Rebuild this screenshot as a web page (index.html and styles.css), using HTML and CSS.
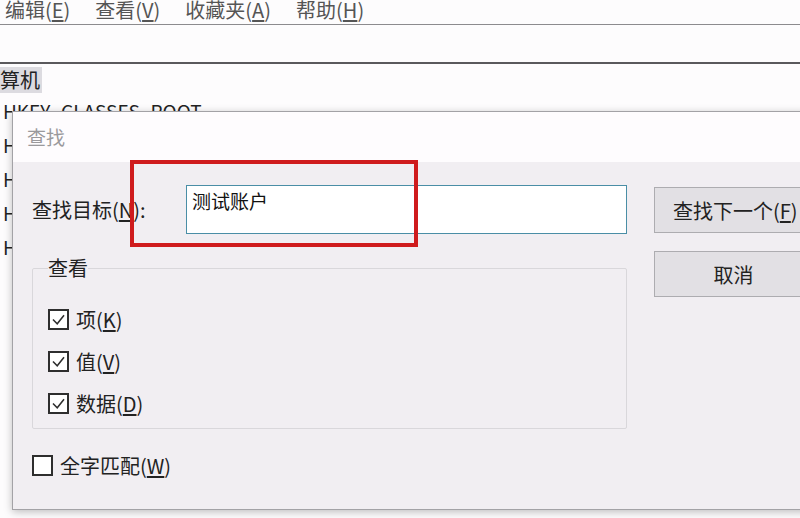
FILE: index.html
```html
<!DOCTYPE html>
<html lang="zh-CN">
<head>
  <meta charset="UTF-8">
  <meta name="viewport" content="width=device-width, initial-scale=1.0">
  <title>注册表编辑器 - 查找</title>
  <link rel="stylesheet" href="styles.css">
</head>
<body>
  <div class="window">
    <div class="menu-bar">
      <span class="menu-item">编辑(<u>E</u>)</span>
      <span class="menu-item">查看(<u>V</u>)</span>
      <span class="menu-item">收藏夹(<u>A</u>)</span>
      <span class="menu-item">帮助(<u>H</u>)</span>
    </div>
    <div class="address-bar"></div>
    <div class="tree">
      <div class="tree-root"><span class="tree-selected">计算机</span></div>
      <div class="tree-item">HKEY_CLASSES_ROOT</div>
      <div class="tree-item">HKEY_CURRENT_USER</div>
      <div class="tree-item">HKEY_LOCAL_MACHINE</div>
      <div class="tree-item">HKEY_USERS</div>
      <div class="tree-item">HKEY_CURRENT_CONFIG</div>
    </div>
  </div>

  <div class="dialog">
    <div class="dialog-title">查找</div>
    <div class="dialog-body">
      <div class="main-col">
        <div class="form-row">
          <label class="find-label" for="find">查找目标(<u>N</u>):</label>
          <div class="find-input" id="find">测试账户</div>
        </div>
        <fieldset class="look-group">
          <legend>查看</legend>
          <div class="check-row">
            <span class="box"><svg viewBox="0 0 20 20"><path d="M3.5 10 L8.5 15 L16.5 5" /></svg></span>
            <span>项(<u>K</u>)</span>
          </div>
          <div class="check-row">
            <span class="box"><svg viewBox="0 0 20 20"><path d="M3.5 10 L8.5 15 L16.5 5" /></svg></span>
            <span>值(<u>V</u>)</span>
          </div>
          <div class="check-row">
            <span class="box"><svg viewBox="0 0 20 20"><path d="M3.5 10 L8.5 15 L16.5 5" /></svg></span>
            <span>数据(<u>D</u>)</span>
          </div>
        </fieldset>
        <div class="check-row whole-word">
          <span class="box"></span>
          <span>全字匹配(<u>W</u>)</span>
        </div>
      </div>
      <div class="button-col">
        <button type="button" class="btn-next">查找下一个(<u>F</u>)</button>
        <button type="button" class="btn-cancel">取消</button>
      </div>
    </div>
  </div>

  <div class="highlight-box"></div>
</body>
</html>
```

FILE: styles.css
```css
body {
  margin: 0;
  padding: 0;
  width: 800px;
  height: 518px;
  overflow: hidden;
  position: relative;
  background-color: #fdfcfd;
  font-family: "Noto Sans CJK SC", "Liberation Sans", sans-serif;
  color: #222;
}

u {
  text-decoration: underline;
  text-underline-offset: 2px;
}

.menu-bar {
  height: 25px;
  display: flex;
  align-items: flex-start;
  padding-left: 5px;
  border-bottom: 1px solid #8c8b8e;
  box-sizing: border-box;
}

.menu-item {
  font-size: 20px;
  line-height: 20px;
  color: #555;
  margin-right: 25px;
}

.address-bar {
  height: 37px;
  border-bottom: 2px solid #5a595c;
}

.tree {
  margin-left: -20px;
  padding-top: 3px;
  font-size: 20px;
  line-height: 26px;
}

.tree-root {
  height: 27px;
}

.tree-selected {
  display: inline-block;
  background-color: #dcdbe0;
  padding-right: 2px;
}

.tree-item {
  padding-left: 23px;
  height: 34px;
  line-height: 34px;
  font-size: 19px;
}

.dialog {
  position: absolute;
  left: 12px;
  top: 111px;
  width: 820px;
  height: 397px;
  border: 1px solid #a3a2a6;
  background-color: #f1eef2;
  box-shadow: 0 2px 8px rgba(0, 0, 0, 0.25);
}

.dialog-title {
  height: 50px;
  background-color: #fefcfe;
  color: #9a999c;
  font-size: 19px;
  line-height: 50px;
  padding-left: 14px;
}

.dialog-body {
  display: flex;
  gap: 27px;
  padding: 23px 0 0 19px;
}

.main-col {
  width: 595px;
  font-size: 20px;
}

.form-row {
  display: flex;
  align-items: center;
  height: 49px;
}

.find-label {
  width: 154px;
  color: #222;
}

.find-input {
  width: 441px;
  height: 49px;
  box-sizing: border-box;
  border: 1px solid #4a8ea6;
  background-color: #fff;
  padding: 1px 5px;
  line-height: 28px;
  font-size: 19px;
  color: #111;
}

.look-group {
  margin: 21px 0 0 0;
  padding: 17px 0 4px 15px;
  border: 1px solid #d9d7db;
  border-radius: 2px;
}

.look-group legend {
  padding: 0;
  line-height: 26px;
  color: #222;
}

.check-row {
  display: flex;
  align-items: center;
  gap: 7px;
  height: 42px;
}

.box {
  width: 21px;
  height: 21px;
  box-sizing: border-box;
  border: 2px solid #2e2e2e;
  background-color: #fff;
  display: inline-flex;
}

.box svg {
  width: 100%;
  height: 100%;
  fill: none;
  stroke: #2e2e2e;
  stroke-width: 1.8;
}

.whole-word {
  margin-top: 15px;
}

.button-col {
  display: flex;
  flex-direction: column;
  gap: 18px;
  padding-top: 2px;
}

button {
  height: 46px;
  font-family: inherit;
  font-size: 20px;
  color: #222;
  background-color: #e2e0e4;
  border: 1px solid #adacb0;
  border-radius: 0;
}

.btn-next {
  width: 160px;
  text-align: left;
  padding-left: 18px;
}

.btn-cancel {
  width: 165px;
  text-align: center;
  padding-left: 0;
}

.highlight-box {
  position: absolute;
  left: 130px;
  top: 160px;
  width: 288px;
  height: 87px;
  box-sizing: border-box;
  border: 4px solid #cf1b1d;
}
```
